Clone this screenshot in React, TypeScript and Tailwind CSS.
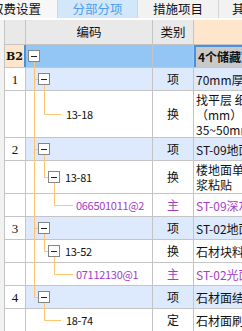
import React from "react";

type Kind = "item" | "sub" | "main";

interface Row {
  no?: string;
  code?: string;
  level: number; // indent of box / text
  box?: boolean;
  type: string;
  name: string[];
  kind: Kind;
  h: string;
}

const rows: Row[] = [
  { no: "1", level: 1, box: true, type: "项", name: ["70mm厚C20细石混凝土"], kind: "item", h: "h-[23px]" },
  { code: "13-18", level: 2, type: "换", name: ["找平层 细石混凝土", "（mm）:70", "35~50mm 厚"], kind: "sub", h: "h-[47px]" },
  { no: "2", level: 1, box: true, type: "项", name: ["ST-09地面石材"], kind: "item", h: "h-[23px]" },
  { code: "13-81", level: 2, box: true, type: "换", name: ["楼地面单块", "浆粘贴"], kind: "sub", h: "h-[33px]" },
  { code: "066501011@2", level: 3, type: "主", name: ["ST-09深灰石材"], kind: "main", h: "h-[23px]" },
  { no: "3", level: 1, box: true, type: "项", name: ["ST-02地面石材"], kind: "item", h: "h-[23px]" },
  { code: "13-52", level: 2, box: true, type: "换", name: ["石材块料面层"], kind: "sub", h: "h-[23px]" },
  { code: "07112130@1", level: 3, type: "主", name: ["ST-02光面石材"], kind: "main", h: "h-[23px]" },
  { no: "4", level: 1, box: true, type: "项", name: ["石材面结晶处理"], kind: "item", h: "h-[23px]" },
  { code: "18-74", level: 2, type: "定", name: ["石材面刷养护液"], kind: "sub", h: "h-[23px]" },
];

const Box = () => (
  <span className="flex w-[12px] h-[12px] shrink-0 items-center justify-center border border-[#858585] bg-white">
    <span className="block w-[6px] h-px bg-[#222]" />
  </span>
);

const codeCls = "text-[11px] tracking-[-0.3px]";

const padFor = (r: Row) => {
  if (r.box) return r.level === 1 ? "pl-[12px]" : "pl-[22px]";
  return r.level === 2 ? "pl-[40px]" : "pl-[50px]";
};

export default function App() {
  return (
    <div className="relative w-[242px] h-[331px] overflow-hidden bg-white text-[12px] text-[#111] font-['Noto_Sans_CJK_SC',sans-serif] leading-none">
      {/* tabs */}
      <div className="flex h-[18px] bg-white text-[12.5px]">
        <div className="w-[58px] shrink-0 flex items-center overflow-hidden bg-[#f7f7f7] border-r border-[#d4d4d4]">
          <span className="ml-[-9px] whitespace-nowrap">取费设置</span>
        </div>
        <div className="w-[80px] shrink-0 flex items-center justify-center bg-[#d2e7fa] text-[#4f9cf0] border-r border-[#d4d4d4]">
          分部分项
        </div>
        <div className="w-[81px] shrink-0 flex items-center justify-center bg-[#f2f2f2] border-r border-[#d4d4d4]">
          措施项目
        </div>
        <div className="flex-1 min-w-0 overflow-hidden flex items-center pl-[13px] whitespace-nowrap bg-[#f2f2f2]">其他项目</div>
      </div>
      <div className="h-[2px]" />

      {/* grid */}
      <div className="flex">
        <div className="w-[5px] shrink-0 bg-[#f2f2f2] border-r border-[#c4c4c4]" />
        <div className="flex-1 flex flex-col min-w-0">
          {/* header */}
          <div className="flex h-[25px] border-b border-[#c4c4c4]">
            <div className="w-[21px] shrink-0 bg-[#e9e9e9] border-r border-[#c4c4c4]" />
            <div className="w-[127px] shrink-0 flex items-center justify-center bg-[#e9e9e9] border-r border-[#c4c4c4] text-[12.5px]">编码</div>
            <div className="w-[41px] shrink-0 flex items-center justify-center bg-[#e9e9e9] border-r border-[#c4c4c4] text-[12.5px]">类别</div>
            <div className="flex-1 bg-[#fde6cc]" />
          </div>

          {/* B2 */}
          <div className="flex h-[23px] border-b border-[#c4c4c4]">
            <div className="w-[21px] shrink-0 flex items-center justify-center bg-[#fde6cc] border-r-2 border-[#4a90e2] font-bold font-['DejaVu_Serif',serif] text-[11px]">
              B2
            </div>
            <div className="w-[127px] shrink-0 flex items-center pl-[2px] bg-[#93c5f5] border-r border-[#c4c4c4]">
              <Box />
            </div>
            <div className="w-[41px] shrink-0 bg-[#93c5f5] border-r border-[#c4c4c4]" />
            <div className="flex-1 min-w-0 flex items-center pl-[2px] bg-[#c9c9c9] border-l-2 border-t-2 border-[#4a90e2] font-bold whitespace-nowrap overflow-hidden">
              4个储藏室
            </div>
          </div>

          {rows.map((r, i) => {
            const bg = r.kind === "item" ? "bg-[#dde9fc]" : "bg-white";
            const purple = r.kind === "main" ? "text-[#a63cc6]" : "";
            return (
              <div key={i} className={`flex ${r.h} border-b border-[#c4c4c4]`}>
                <div className="w-[21px] shrink-0 flex items-center justify-center bg-white border-r border-[#c4c4c4] font-['Liberation_Serif',serif] text-[13px]">
                  {r.no}
                </div>
                <div className={`w-[127px] shrink-0 flex items-center gap-[5px] ${padFor(r)} ${bg} border-r border-[#c4c4c4] whitespace-nowrap overflow-hidden`}>
                  {r.box && <Box />}
                  {r.code && <span className={`${codeCls} ${purple}`}>{r.code}</span>}
                </div>
                <div className={`w-[41px] shrink-0 flex items-center justify-center ${bg} ${purple} border-r border-[#c4c4c4]`}>
                  {r.type}
                </div>
                <div className={`flex-1 min-w-0 flex flex-col justify-center pl-[2px] ${bg} ${purple} whitespace-nowrap overflow-hidden leading-[15px]`}>
                  {r.name.map((n, j) => (
                    <span key={j}>{n}</span>
                  ))}
                </div>
              </div>
            );
          })}
        </div>
      </div>

      {/* tree connectors */}
      <svg className="absolute left-0 top-0 pointer-events-none" width="242" height="331" fill="none" stroke="#ffc470" strokeWidth="1">
        <path d="M34.5 62V297.5M34 79.5H38M34 149.5H38M34 228.5H38M34 297.5H38" />
        <path d="M44.5 85V114.5H61" />
        <path d="M44.5 155V177.5H48" />
        <path d="M54.5 183V205.5H73" />
        <path d="M44.5 234V251.5H48" />
        <path d="M54.5 257V274.5H73" />
        <path d="M44.5 303V320.5H61" />
      </svg>
    </div>
  );
}
